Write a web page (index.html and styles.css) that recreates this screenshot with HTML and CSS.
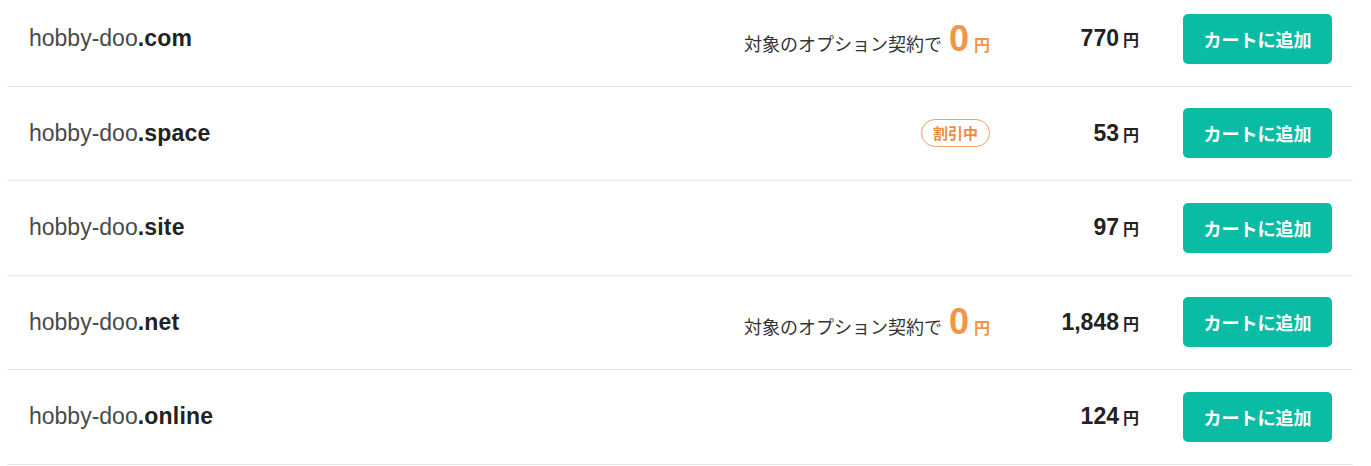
FILE: index.html
```html
<!DOCTYPE html>
<html lang="ja">
<head>
  <meta charset="UTF-8">
  <title>ドメイン検索結果</title>
  <meta name="viewport" content="width=device-width, initial-scale=1.0">
  <link rel="stylesheet" href="styles.css">
</head>
<body>
  <ul class="result-list">
    <li class="result-row">
      <div class="domain">hobby-doo<b>.com</b></div>
      <div class="note">対象のオプション契約で <span class="zero">0</span><span class="zero-yen">円</span></div>
      <div class="price">770<span class="yen">円</span></div>
      <button class="cart-btn">カートに追加</button>
    </li>
    <li class="result-row">
      <div class="domain">hobby-doo<b>.space</b></div>
      <div class="note"><span class="badge">割引中</span></div>
      <div class="price">53<span class="yen">円</span></div>
      <button class="cart-btn">カートに追加</button>
    </li>
    <li class="result-row">
      <div class="domain">hobby-doo<b>.site</b></div>
      <div class="note"></div>
      <div class="price">97<span class="yen">円</span></div>
      <button class="cart-btn">カートに追加</button>
    </li>
    <li class="result-row">
      <div class="domain">hobby-doo<b>.net</b></div>
      <div class="note">対象のオプション契約で <span class="zero">0</span><span class="zero-yen">円</span></div>
      <div class="price">1,848<span class="yen">円</span></div>
      <button class="cart-btn">カートに追加</button>
    </li>
    <li class="result-row">
      <div class="domain">hobby-doo<b>.online</b></div>
      <div class="note"></div>
      <div class="price">124<span class="yen">円</span></div>
      <button class="cart-btn">カートに追加</button>
    </li>
  </ul>
</body>
</html>
```

FILE: styles.css
```css
body {
  margin: 0;
  background: #fff;
  color: #222;
  font-family: "Liberation Sans", Arial, "Noto Sans CJK JP", sans-serif;
}
.result-list {
  list-style: none;
  margin: -8px 18px 0 7px;
  padding: 0;
}
.result-row {
  display: flex;
  align-items: center;
  height: 93.5px;
  padding: 0 21px 0 22px;
  border-bottom: 1px solid #e5e5e5;
}
.domain {
  flex: 1;
  font-size: 23px;
  color: #4a4a4a;
}
.domain b {
  color: #222;
  letter-spacing: 0.2px;
}
.note {
  display: flex;
  align-items: baseline;
  justify-content: flex-end;
  font-size: 18px;
  color: #333;
  font-family: "Noto Sans CJK JP", sans-serif;
}
.zero {
  margin-left: 7px;
  font-family: "Liberation Sans", Arial, sans-serif;
  font-size: 36px;
  font-weight: bold;
  color: #f39447;
}
.zero-yen {
  margin-left: 5px;
  font-size: 16px;
  font-weight: bold;
  color: #f39447;
}
.badge {
  display: inline-block;
  padding: 3px 11px;
  border: 1px solid #f0a062;
  border-radius: 15px;
  font-size: 15px;
  font-weight: bold;
  color: #ef8b3d;
  line-height: 20px;
}
.price {
  width: 149px;
  text-align: right;
  font-size: 23px;
  font-weight: bold;
  color: #222;
}
.yen {
  margin-left: 4px;
  font-family: "Noto Sans CJK JP", sans-serif;
  font-size: 16px;
}
.cart-btn {
  width: 149px;
  height: 50px;
  margin-left: 44px;
  border: none;
  border-radius: 5px;
  background: #0bbca4;
  color: #fff;
  font-family: "Noto Sans CJK JP", sans-serif;
  font-size: 18px;
  font-weight: bold;
  cursor: pointer;
}
```
